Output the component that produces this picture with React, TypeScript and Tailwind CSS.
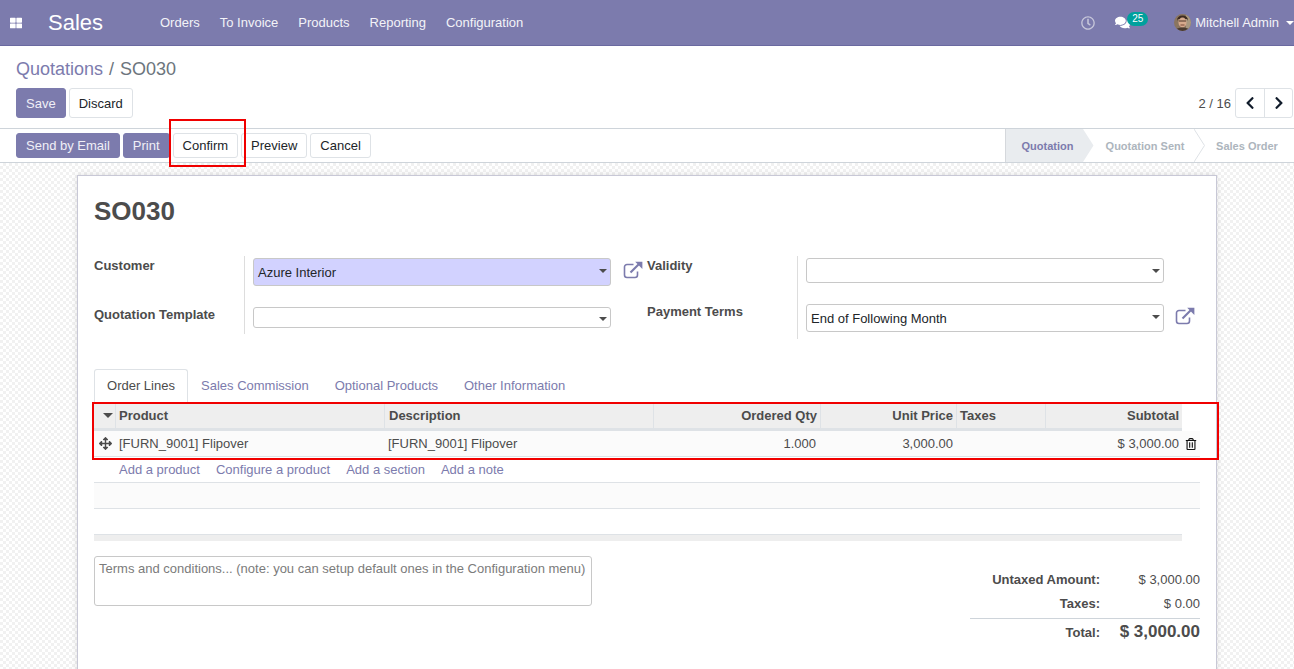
import React from "react";
import { FaThLarge, FaRegClock, FaComments, FaChevronLeft, FaChevronRight, FaArrowsAlt, FaRegTrashAlt } from "react-icons/fa";

function Caret({ className = "" }: { className?: string }) {
  return <span className={"inline-block h-0 w-0 border-x-[4px] border-t-[4px] border-x-transparent " + className} />;
}

function ExtLink() {
  return (
    <svg width="20" height="18" viewBox="0 0 20 18" className="shrink-0 text-[#7c7bad]" fill="none" stroke="currentColor">
      <path d="M14.5 10.5v3.5a2.5 2.5 0 0 1-2.5 2.5H4a2.5 2.5 0 0 1-2.5-2.5V6A2.5 2.5 0 0 1 4 3.5h6.5" strokeWidth="1.6" />
      <path d="M7.5 11.5 16.5 2.5" strokeWidth="2.1" />
      <path d="M12.2 0.8H19.4V8Z" fill="currentColor" stroke="none" />
    </svg>
  );
}

function Avatar() {
  return (
    <svg width="17" height="17" viewBox="0 0 17 17" className="shrink-0">
      <defs>
        <clipPath id="avatarClip"><circle cx="8.5" cy="8.5" r="8.5" /></clipPath>
      </defs>
      <g clipPath="url(#avatarClip)">
        <rect width="17" height="17" fill="#8a7560" />
        <rect x="12" width="5" height="17" fill="#a89880" />
        <path d="M3 7Q3 1.5 8.5 1.5T14 7L13 5H4Z" fill="#3d2b20" />
        <ellipse cx="8.5" cy="8.5" rx="4" ry="5" fill="#d6a98c" />
        <path d="M5 7h7" stroke="#4a3428" strokeWidth="1" />
        <path d="M6.5 11h4" stroke="#7a4a3a" strokeWidth="1" />
        <path d="M1 17Q2 13.5 8.5 13.5T16 17Z" fill="#4a3a30" />
      </g>
    </svg>
  );
}

const NAV = ["Orders", "To Invoice", "Products", "Reporting", "Configuration"];

function SecondaryBtn({ children, className = "" }: { children: React.ReactNode; className?: string }) {
  return (
    <button className={"rounded-[3px] border border-[#dee2e6] bg-white px-[9px] text-[13px] text-[#212529] " + className}>
      {children}
    </button>
  );
}

function PrimaryBtn({ children, className = "" }: { children: React.ReactNode; className?: string }) {
  return (
    <button className={"rounded-[3px] border border-[#7c7bad] bg-[#7c7bad] px-[9px] text-[13px] text-[#f0eff7] " + className}>
      {children}
    </button>
  );
}

function Field({ value, h, accent = false, caret = "" }: { value?: string; h: string; accent?: boolean; caret?: string }) {
  return (
    <div
      className={
        "flex w-[358px] shrink-0 items-center justify-between rounded-[3px] border border-[#c8c8c8] pl-1 pr-[3px] text-[13px] text-[#212529] " +
        h + " " + (accent ? "bg-[#d2d2ff]" : "bg-white")
      }
    >
      <span className="pt-px">{value}</span>
      <Caret className={"border-t-[#4c4c4c] " + caret} />
    </div>
  );
}

function Step({ label, active = false, w }: { label: string; active?: boolean; w: string }) {
  return (
    <div className={"relative flex h-full items-center justify-center pt-px text-[11px] font-bold " + w + " " + (active ? "border-l border-[#d5d8dc] bg-[#e9ecef] text-[#7c7bad]" : "text-[#adb5bd]")}>
      {label}
      <svg width="11" height="33" viewBox="0 0 11 33" className="absolute left-full top-0 z-10" fill={active ? "#e9ecef" : "#ffffff"} stroke={active ? "none" : "#dee2e6"}>
        <path d="M0 0 10.5 16.5 0 33" />
      </svg>
    </div>
  );
}

const COLS = "grid grid-cols-[21px_269px_269px_167px_136px_89px_137px]";

export default function App() {
  return (
    <div className="relative flex h-[669px] w-full flex-col overflow-hidden bg-white font-['Liberation_Sans',Arial,sans-serif] text-[13px] text-[#4c4c4c]">
      {/* Navbar */}
      <header className="flex h-[46px] shrink-0 items-center border-b border-[#6a69a0] bg-[#7c7bad] text-[#f3f3f8]">
        <FaThLarge className="ml-[10px] text-[12px] text-white" />
        <span className="ml-[26px] w-[102px] text-[22px] leading-none text-white">Sales</span>
        <nav className="flex">
          {NAV.map((n) => (
            <span key={n} className="px-[10px]">{n}</span>
          ))}
        </nav>
        <div className="ml-auto flex items-center">
          <FaRegClock className="text-[14px] text-[#c7c7da]" />
          <span className="relative ml-5 flex items-center">
            <FaComments className="text-[15px] text-white" />
            <span className="absolute left-[12px] top-[-3px] flex h-[14px] w-[21px] items-center justify-center rounded-full bg-[#00a09d] text-[10px] leading-none text-white">25</span>
          </span>
          <span className="ml-11 flex items-center">
            <Avatar />
            <span className="ml-1">Mitchell Admin</span>
            <Caret className="ml-[7px] border-t-white" />
          </span>
        </div>
      </header>

      {/* Control panel */}
      <div className="shrink-0 bg-white">
        <div className="px-4 pt-[12px]">
          <div className="flex h-[22px] items-center text-[18px] leading-none">
            <span className="text-[#7c7bad]">Quotations</span>
            <span className="mx-[6px] text-[#6c757d]">/</span>
            <span className="text-[#6c757d]">SO030</span>
          </div>
          <div className="mt-2 flex h-[30px] items-stretch">
            <PrimaryBtn className="pt-px">Save</PrimaryBtn>
            <SecondaryBtn className="ml-[3px] pt-px">Discard</SecondaryBtn>
            <div className="-mr-[15px] ml-auto flex items-center">
              <span className="mr-1 pt-px text-[#4c4c4c]">2 / 16</span>
              <div className="flex h-full rounded-[3px] border border-[#dee2e6]">
                <span className="flex w-[29px] items-center justify-center border-r border-[#dee2e6] text-[#111c2b]"><FaChevronLeft className="text-[14px]" /></span>
                <span className="flex w-[27px] items-center justify-center text-[#111c2b]"><FaChevronRight className="text-[14px]" /></span>
              </div>
            </div>
          </div>
        </div>
        <div className="mt-[10px] flex h-[35px] items-center border-y border-[#ced4da] pl-4">
          <div className="flex h-[25px] items-stretch">
            <PrimaryBtn>Send by Email</PrimaryBtn>
            <PrimaryBtn className="ml-[3px]">Print</PrimaryBtn>
            <SecondaryBtn className="ml-[3px]">Confirm</SecondaryBtn>
            <SecondaryBtn className="ml-[3px]">Preview</SecondaryBtn>
            <SecondaryBtn className="ml-[3px]">Cancel</SecondaryBtn>
          </div>
          <div className="ml-auto flex h-full">
            <Step label="Quotation" active w="w-[78px] pl-[6px]" />
            <div className="w-[11px]" />
            <Step label="Quotation Sent" w="w-[100px] pl-[2px]" />
            <div className="w-[11px]" />
            <Step label="Sales Order" w="w-[89px] pr-[5px]" />
          </div>
        </div>
      </div>

      {/* Content */}
      <main className="min-h-0 flex-1 bg-[repeating-conic-gradient(#f1f1f1_0_25%,#ffffff_0_50%)] bg-[length:6px_6px] pl-[77px] pt-[12px]">
        <div className="h-[600px] w-[1140px] border border-[#c8c8d6] bg-white pl-4 shadow-[0_0_6px_rgba(0,0,0,0.12)]">
          <h1 className="mt-5 text-[26px] font-bold leading-[30px] text-[#4c4c4c]">SO030</h1>

          {/* Form groups */}
          <div className="mt-[30px] flex">
            <div className="w-[553px]">
              <div className="flex h-[49px]">
                <label className="w-[150px] font-bold">Customer</label>
                <div className="flex h-full items-start border-l border-[#ddd] pl-2 pt-[2px]">
                  <Field value="Azure Interior" h="h-[28px]" accent caret="-mt-[2px]" />
                  <span className="ml-3 mt-[3px]"><ExtLink /></span>
                </div>
              </div>
              <div className="flex h-[29px]">
                <label className="w-[150px] font-bold">Quotation Template</label>
                <div className="flex h-full items-start border-l border-[#ddd] pl-2 pt-[2px]">
                  <Field h="h-[21px]" caret="mt-[3px]" />
                </div>
              </div>
            </div>
            <div className="w-[553px]">
              <div className="flex h-[46px]">
                <label className="w-[150px] font-bold">Validity</label>
                <div className="flex h-full items-start border-l border-[#ddd] pl-2 pt-[2px]">
                  <Field h="h-[25px]" />
                </div>
              </div>
              <div className="flex h-[37px]">
                <label className="w-[150px] font-bold">Payment Terms</label>
                <div className="flex h-full items-start border-l border-[#ddd] pl-2 pt-[2px]">
                  <Field value="End of Following Month" h="h-[28px]" caret="-mt-[2px]" />
                  <span className="ml-[11px] mt-[3px]"><ExtLink /></span>
                </div>
              </div>
            </div>
          </div>

          {/* Tabs */}
          <div className="mt-[30px] flex h-[33px] items-stretch text-[#7c7bad]">
            <span className="flex w-[94px] items-center justify-center rounded-t-[3px] border-x border-t border-[#dee2e6] text-[#4c4c4c]">Order Lines</span>
            <span className="ml-[13px] flex items-center">Sales Commission</span>
            <span className="ml-[26px] flex items-center">Optional Products</span>
            <span className="ml-[26px] flex items-center">Other Information</span>
          </div>

          {/* Table */}
          <div className={COLS + " mt-px h-[28px] w-[1088px] items-stretch border-b-[3px] border-[#dee2e6] bg-[#eeeeee] font-bold"}>
            <div className="flex items-center justify-center"><Caret className="ml-[7px] border-x-[5px] border-t-[5px] border-t-[#4c4c4c]" /></div>
            <div className="flex items-center border-l border-[#dee2e6] pl-[3px]">Product</div>
            <div className="flex items-center border-l border-[#dee2e6] pl-[4px]">Description</div>
            <div className="flex items-center justify-end border-l border-[#dee2e6] pr-[3px]">Ordered Qty</div>
            <div className="flex items-center justify-end border-l border-[#dee2e6] pr-[3px]">Unit Price</div>
            <div className="flex items-center border-l border-[#dee2e6] pl-[3px]">Taxes</div>
            <div className="flex items-center justify-end border-l border-[#dee2e6] pr-[3px]">Subtotal</div>
          </div>
          <div className="flex h-[26px] w-[1106px] items-center border-b border-[#dee2e6] bg-[#fbfbfb]">
            <div className={COLS + " w-[1088px] items-center"}>
              <div className="flex justify-center pl-[1px]"><FaArrowsAlt className="text-[13px] text-[#4c4c4c]" /></div>
              <div className="pl-[4px]">[FURN_9001] Flipover</div>
              <div className="pl-[4px]">[FURN_9001] Flipover</div>
              <div className="pr-[4px] text-right">1.000</div>
              <div className="pr-[3px] text-right">3,000.00</div>
              <div />
              <div className="pr-[3px] text-right">$ 3,000.00</div>
            </div>
            <FaRegTrashAlt className="ml-[3px] text-[12px] text-[#111111]" />
          </div>
          <div className="flex h-[25px] items-center gap-4 pl-[25px] pt-px text-[#7c7bad]">
            <span>Add a product</span>
            <span>Configure a product</span>
            <span>Add a section</span>
            <span>Add a note</span>
          </div>
          <div className="h-[27px] w-[1106px] border-y border-[#dee2e6] bg-[#fbfbfb]" />
          <div className="h-[25px]" />
          <div className="h-[7px] w-[1088px] border-t border-[#dee2e6] bg-[#eeeeee]" />

          {/* Notes and totals */}
          <div className="mt-[15px] flex w-[1106px] items-start justify-between">
            <div className="h-[50px] w-[498px] rounded-[3px] border border-[#c8c8c8] px-1 pt-[2px] text-[#7b7b7b]">
              Terms and conditions... (note: you can setup default ones in the Configuration menu)
            </div>
            <div className="mt-[12px] w-[230px]">
              <div className="flex h-[24px] items-center justify-end">
                <strong className="font-bold">Untaxed Amount:</strong>
                <span className="w-[100px] text-right">$ 3,000.00</span>
              </div>
              <div className="flex h-[24px] items-center justify-end">
                <strong className="font-bold">Taxes:</strong>
                <span className="w-[100px] text-right">$ 0.00</span>
              </div>
              <div className="mt-[2px] flex h-[26px] items-center justify-end border-t border-[#ced4da]">
                <strong className="mt-[2px] font-bold">Total:</strong>
                <span className="w-[100px] text-right text-[17px] font-bold leading-none">$ 3,000.00</span>
              </div>
            </div>
          </div>
        </div>
      </main>

      {/* Red highlight annotations */}
      <div className="pointer-events-none absolute left-[169px] top-[119px] h-[48px] w-[77px] border-2 border-[#f00000]" />
      <div className="pointer-events-none absolute left-[92px] top-[402px] h-[58px] w-[1127px] border-2 border-[#f00000]" />
    </div>
  );
}
